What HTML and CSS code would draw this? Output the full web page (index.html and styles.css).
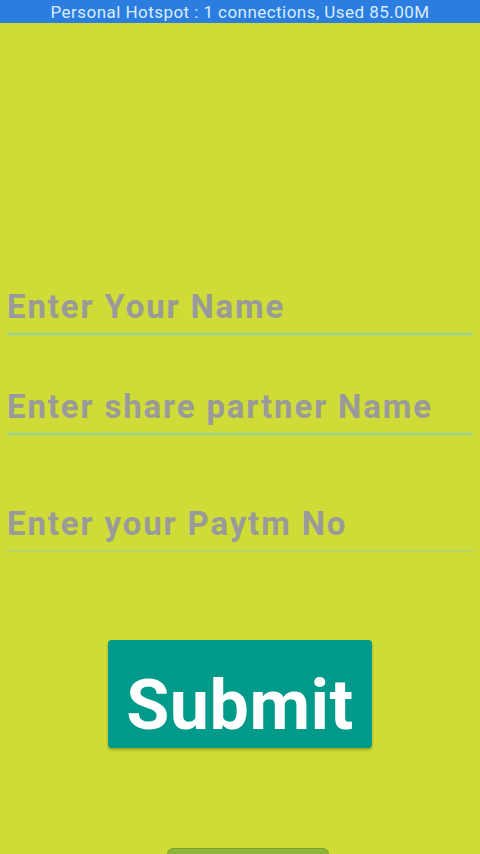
FILE: index.html
```html
<!DOCTYPE html>
<html lang="en">
<head>
<meta charset="utf-8">
<title>Share Form</title>
<link rel="stylesheet" href="styles.css">
</head>
<body>
<div class="statusbar">Personal Hotspot : 1 connections, Used 85.00M</div>
<main class="form">
  <div class="field field-name">Enter Your Name</div>
  <div class="field field-partner">Enter share partner Name</div>
  <div class="field field-paytm">Enter your Paytm No</div>
  <button class="submit" type="button">Submit</button>
  <div class="next-btn"></div>
</main>
</body>
</html>
```
FILE: styles.css
```css
html, body {
  margin: 0;
  padding: 0;
  height: 854px;
  overflow: hidden;
}
body {
  background: #cfdc37;
  font-family: Roboto, "Noto Sans", sans-serif;
}
.statusbar {
  height: 23px;
  background: #2b7ee0;
  color: #dcecff;
  font-size: 17px;
  letter-spacing: 0.45px;
  line-height: 24px;
  text-align: center;
}
.form {
  display: flex;
  flex-direction: column;
  padding: 0 7px;
}
.field {
  font-size: 33px;
  letter-spacing: 1.85px;
  font-weight: 700;
  color: #9a9a9a;
  line-height: 40px;
  padding-bottom: 6px;
  border-bottom: 2px solid #93d3a8;
  white-space: nowrap;
}
.field-name { margin-top: 264px; }
.field-partner { margin-top: 52px; }
.field-paytm { margin-top: 69px; border-bottom-color: #b2d86a; }
.submit {
  align-self: center;
  margin-top: 88px;
  width: 264px;
  height: 108px;
  border: none;
  border-radius: 4px;
  background: #009a8a;
  color: #ffffff;
  font-family: Roboto, "Noto Sans", sans-serif;
  font-size: 70px;
  letter-spacing: 0.5px;
  font-weight: 700;
  box-shadow: 0 2px 3px rgba(0, 0, 0, 0.25);
  padding: 22px 0 0;
}
.next-btn {
  align-self: flex-start;
  margin-top: 100px;
  margin-left: 160px;
  width: 162px;
  height: 30px;
  border-radius: 6px;
  background: #8cb53a;
  border: 1px solid #7a9e30;
  box-sizing: border-box;
}
```
